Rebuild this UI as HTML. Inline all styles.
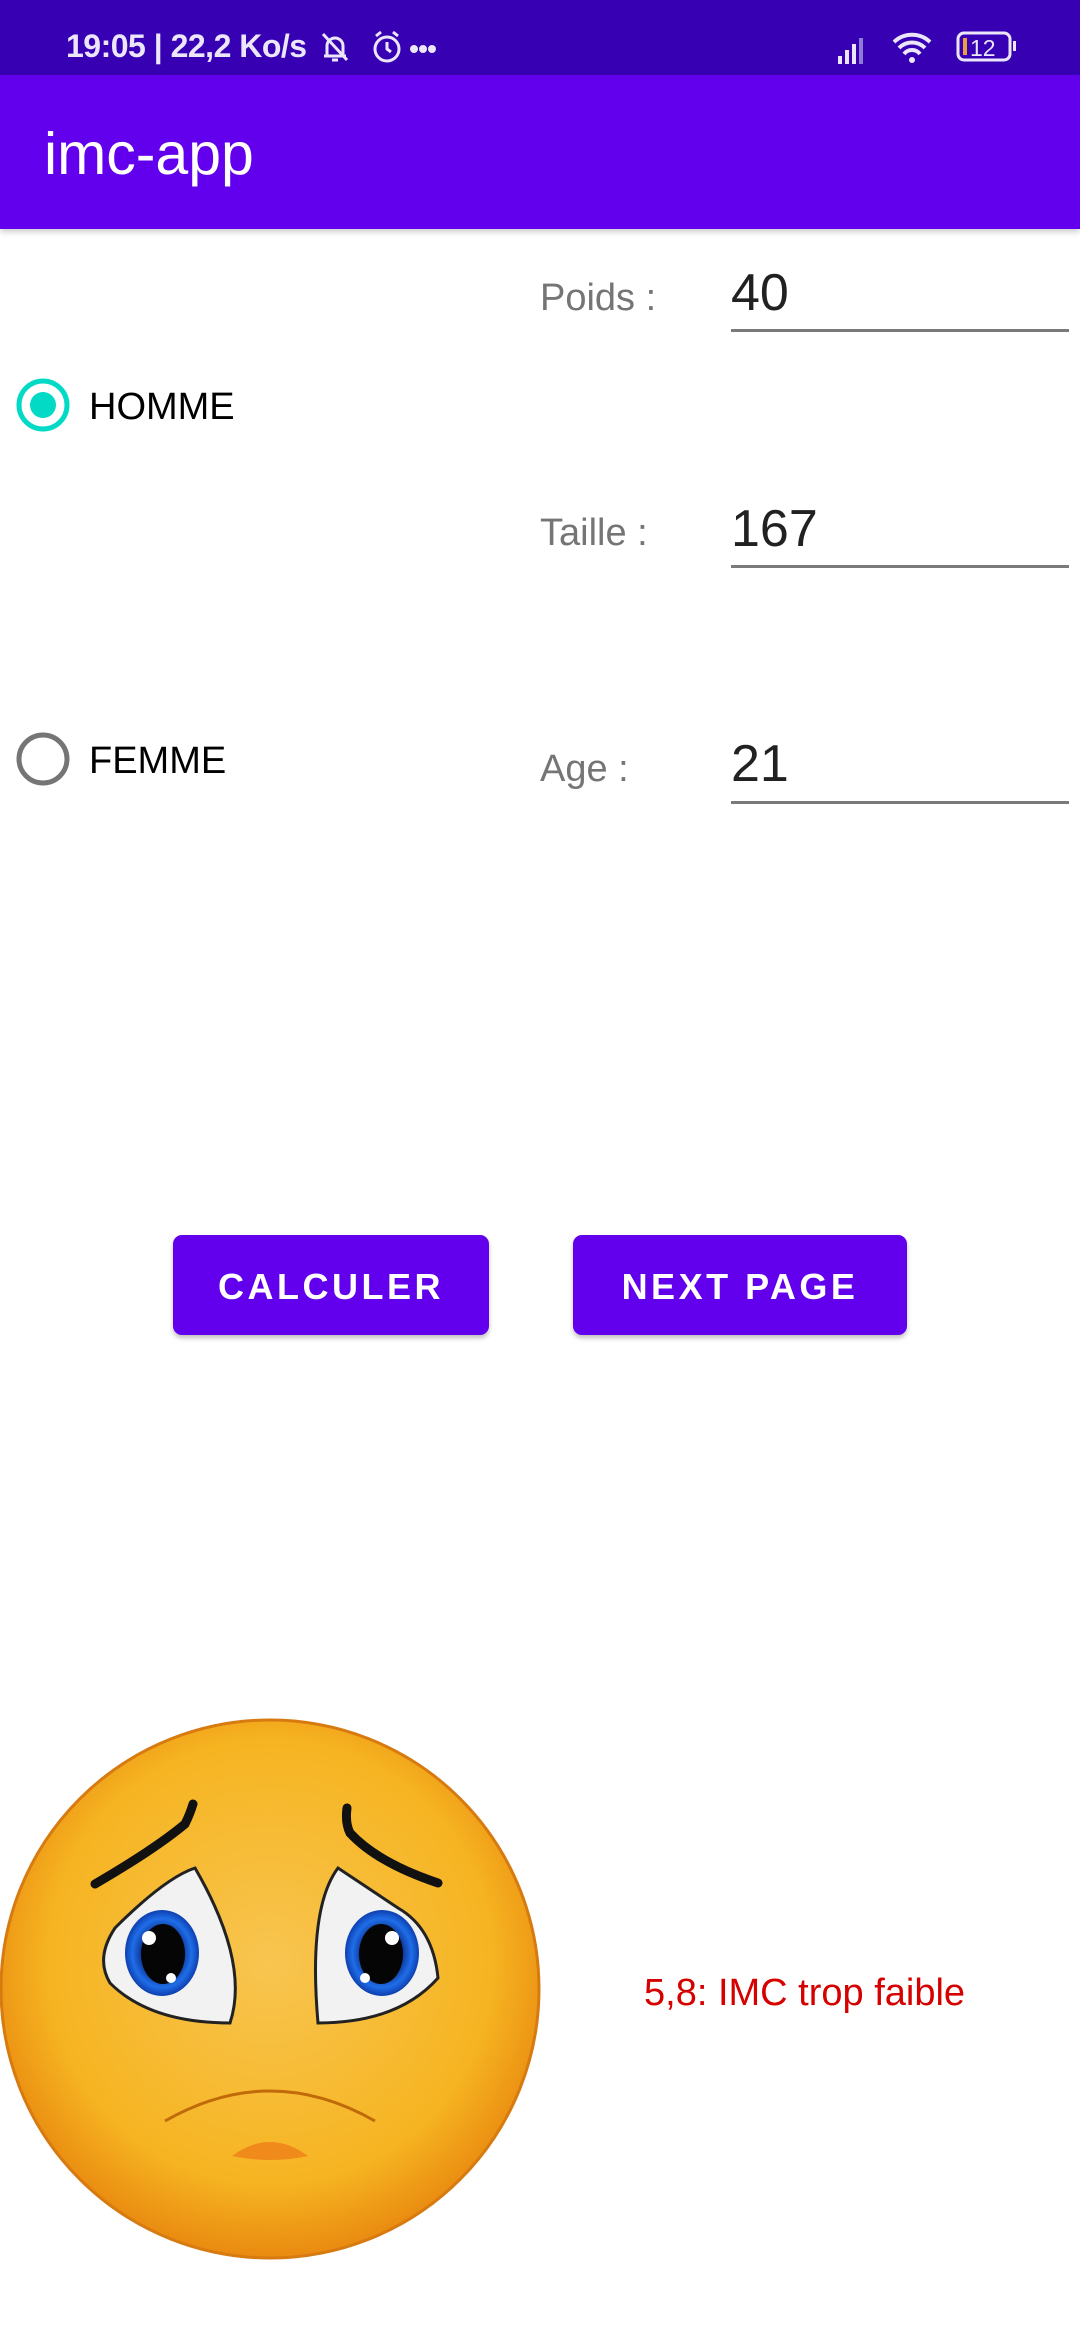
<!DOCTYPE html>
<html><head><meta charset="utf-8"><style>
*{margin:0;padding:0;box-sizing:border-box}
body{width:1080px;height:2340px;background:#fff;position:relative;overflow:hidden;font-family:"Liberation Sans",sans-serif}
.abs{position:absolute}
.sb{left:0;top:0;width:1080px;height:75px;background:#3700B3;color:#ece6fb}
.tb{left:0;top:75px;width:1080px;height:154px;background:#6200EE;box-shadow:0 3px 6px rgba(0,0,0,.2)}
.lbl{color:#757575;font-size:38px;left:540px}
.val{color:#212121;font-size:52px;left:731px}
.ul{left:731px;width:338px;height:3px;background:#7a7a7a}
.btn{background:#6200EE;color:#fff;border-radius:9px;font-weight:bold;font-size:36px;letter-spacing:3.5px;display:flex;align-items:center;justify-content:center;box-shadow:0 3px 5px rgba(0,0,0,.25);top:1235px;height:100px;padding-top:4px}
.rt{font-size:38px;color:#000;left:89px}
</style></head><body>
<div class="abs sb">
 <div class="abs" style="left:66px;top:28px;font-size:32px;font-weight:bold;letter-spacing:-0.5px">19:05 | 22,2 Ko/s</div>
 <svg class="abs" style="left:318px;top:28px" width="140" height="40" viewBox="0 0 140 40" fill="none" stroke="#ece6fb" stroke-width="3">
  <path d="M6 28h22M9 28v-10a8 8 0 0 1 16 0v10M14 32h6M5 6l24 26"/>
  <circle cx="69" cy="21" r="12"/><path d="M69 14v7l4 3M58 8l5-4M80 8l-5-4"/>
  <circle cx="96" cy="21" r="2.5" fill="#ece6fb"/><circle cx="105" cy="21" r="2.5" fill="#ece6fb"/><circle cx="114" cy="21" r="2.5" fill="#ece6fb"/>
 </svg>
 <svg class="abs" style="left:836px;top:28px" width="190" height="40" viewBox="0 0 190 40">
  <rect x="2" y="28" width="4" height="8" fill="#ece6fb"/><rect x="9" y="22" width="4" height="14" fill="#ece6fb"/><rect x="16" y="16" width="4" height="20" fill="#ece6fb"/><rect x="23" y="10" width="4" height="26" fill="#8e7bd6"/>
  <path d="M58 14a26 26 0 0 1 36 0M63 20a18 18 0 0 1 26 0M68 26a10 10 0 0 1 16 0" stroke="#ece6fb" stroke-width="4" fill="none"/><circle cx="76" cy="32" r="3" fill="#ece6fb"/>
  <rect x="122" y="5" width="52" height="27" rx="6" stroke="#ece6fb" stroke-width="3" fill="none"/><rect x="177" y="13" width="3" height="10" fill="#ece6fb"/>
  <rect x="127" y="10" width="4" height="17" fill="#e8a040"/>
  <text x="134" y="28" font-size="23" fill="#ece6fb" font-family="Liberation Sans">12</text>
 </svg>
</div>
<div class="abs tb"><div class="abs" style="left:44px;top:45px;font-size:59px;color:#fff">imc-app</div></div>

<div class="abs lbl" style="top:277px">Poids :</div>
<div class="abs val" style="top:263px">40</div>
<div class="abs ul" style="top:329px"></div>
<div class="abs lbl" style="top:512px">Taille :</div>
<div class="abs val" style="top:499px">167</div>
<div class="abs ul" style="top:565px"></div>
<div class="abs lbl" style="top:748px">Age :</div>
<div class="abs val" style="top:734px">21</div>
<div class="abs ul" style="top:801px"></div>

<svg class="abs" style="left:14px;top:376px" width="58" height="58"><circle cx="29" cy="29" r="24" stroke="#03DAC5" stroke-width="5" fill="none"/><circle cx="29" cy="29" r="13" fill="#03DAC5"/></svg>
<div class="abs rt" style="top:386px">HOMME</div>
<svg class="abs" style="left:14px;top:730px" width="58" height="58"><circle cx="29" cy="29" r="24" stroke="#757575" stroke-width="5" fill="none"/></svg>
<div class="abs rt" style="top:740px">FEMME</div>

<div class="abs btn" style="left:173px;width:316px">CALCULER</div>
<div class="abs btn" style="left:573px;width:334px">NEXT PAGE</div>

<svg class="abs" style="left:0;top:1716px" width="545" height="546" viewBox="0 0 545 546">
 <defs>
  <radialGradient id="g" cx="50%" cy="45%" r="55%"><stop offset="0" stop-color="#f8c550"/><stop offset=".75" stop-color="#f6b421"/><stop offset="1" stop-color="#e98a10"/></radialGradient>
  <radialGradient id="ir" cx="50%" cy="50%" r="50%"><stop offset=".5" stop-color="#0a2a8a"/><stop offset=".8" stop-color="#1f6ee8"/><stop offset="1" stop-color="#0d3fb0"/></radialGradient>
 </defs>
 <circle cx="270" cy="273" r="269" fill="url(#g)" stroke="#d77a10" stroke-width="3"/>
 <path d="M95 168q60-35 90-60q5-10 8-20" stroke="#111" stroke-width="9" fill="none" stroke-linecap="round"/>
 <path d="M438 167q-60-20 -88-50q-5-10 -3-25" stroke="#111" stroke-width="9" fill="none" stroke-linecap="round"/>
 <path d="M195 152q-30 10 -80 60q-20 30 -5 55q40 40 120 40q20-60 -35-155z" fill="#f2f2f2" stroke="#222" stroke-width="3"/>
 <path d="M338 152q-30 40 -20 155q80 0 120-45q-5-50 -40-70q-30-20 -60-40z" fill="#f2f2f2" stroke="#222" stroke-width="3"/>
 <ellipse cx="162" cy="237" rx="37" ry="43" fill="url(#ir)"/><ellipse cx="163" cy="238" rx="22" ry="30" fill="#050505"/>
 <circle cx="149" cy="222" r="7" fill="#fff"/><circle cx="171" cy="262" r="5" fill="#fff"/>
 <ellipse cx="382" cy="237" rx="37" ry="43" fill="url(#ir)"/><ellipse cx="381" cy="238" rx="22" ry="30" fill="#050505"/>
 <circle cx="392" cy="222" r="7" fill="#fff"/><circle cx="365" cy="262" r="5" fill="#fff"/>
 <path d="M165 405q105-60 210 0" stroke="#c06a0a" stroke-width="3" fill="none"/>
 <path d="M232 440q38-28 76 0q-38 8 -76 0z" fill="#f08a1a"/>
</svg>
<div class="abs" style="left:644px;top:1972px;font-size:38px;color:#d50000">5,8: IMC trop faible</div>
</body></html>
